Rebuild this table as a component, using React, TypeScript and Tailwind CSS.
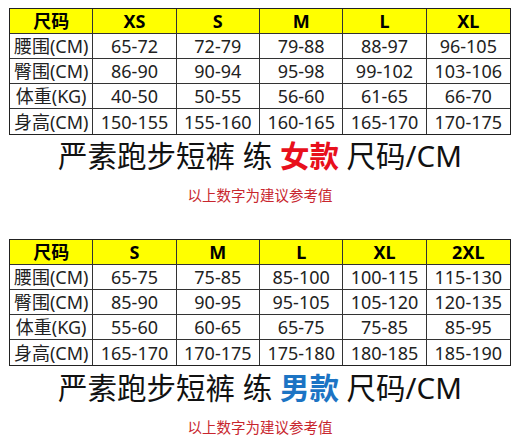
import React from "react";

const font = { fontFamily: '"Noto Sans", "Noto Sans CJK SC", sans-serif' };

type T = { head: string[]; rows: string[][] };

const women: T = {
  head: ["尺码", "XS", "S", "M", "L", "XL"],
  rows: [
    ["腰围(CM)", "65-72", "72-79", "79-88", "88-97", "96-105"],
    ["臀围(CM)", "86-90", "90-94", "95-98", "99-102", "103-106"],
    ["体重(KG)", "40-50", "50-55", "56-60", "61-65", "66-70"],
    ["身高(CM)", "150-155", "155-160", "160-165", "165-170", "170-175"],
  ],
};

const men: T = {
  head: ["尺码", "S", "M", "L", "XL", "2XL"],
  rows: [
    ["腰围(CM)", "65-75", "75-85", "85-100", "100-115", "115-130"],
    ["臀围(CM)", "85-90", "90-95", "95-105", "105-120", "120-135"],
    ["体重(KG)", "55-60", "60-65", "65-75", "75-85", "85-95"],
    ["身高(CM)", "165-170", "170-175", "175-180", "180-185", "185-190"],
  ],
};

function SizeTable({ t }: { t: T }) {
  return (
    <div className="mx-[9px] border-[1.5px] border-[#222] grid grid-cols-6 bg-white">
      {t.head.map((h, i) => (
        <div
          key={i}
          className={`h-[25px] bg-[#ffff00] flex items-center justify-center font-bold text-[18px] leading-none text-black border-b border-[#333] ${i < 5 ? "border-r" : ""}`}
        >
          {h}
        </div>
      ))}
      {t.rows.map((r, ri) =>
        r.map((c, ci) => (
          <div
            key={ri + "-" + ci}
            className={`h-[25px] flex items-center justify-center text-[18px] leading-none text-[#222] border-[#333] ${ci < 5 ? "border-r" : ""} ${ri < 3 ? "border-b" : ""}`}
          >
            {c}
          </div>
        ))
      )}
    </div>
  );
}

function Title({ word, color }: { word: string; color: string }) {
  return (
    <div className="h-[40px] flex items-center justify-center text-[29.5px] leading-none text-[#111] whitespace-pre">
      <span>严素跑步短裤 练 </span>
      <span className={`font-bold ${color}`}>{word}</span>
      <span> 尺码/CM</span>
    </div>
  );
}

export default function App() {
  return (
    <div className="w-[520px] h-[445px] bg-white overflow-hidden pt-[8px]" style={font}>
      <SizeTable t={women} />
      <div className="mt-[1px]">
        <Title word="女款" color="text-[#e8101c]" />
      </div>
      <div className="mt-[9px] h-[20px] flex items-center justify-center text-[14.5px] leading-none text-[#c8262e]">
        以上数字为建议参考值
      </div>
      <div className="mt-[34px]">
        <SizeTable t={men} />
      </div>
      <div className="mt-[2px]">
        <Title word="男款" color="text-[#1c74c4]" />
      </div>
      <div className="mt-[9px] h-[20px] flex items-center justify-center text-[14.5px] leading-none text-[#c8262e]">
        以上数字为建议参考值
      </div>
    </div>
  );
}
